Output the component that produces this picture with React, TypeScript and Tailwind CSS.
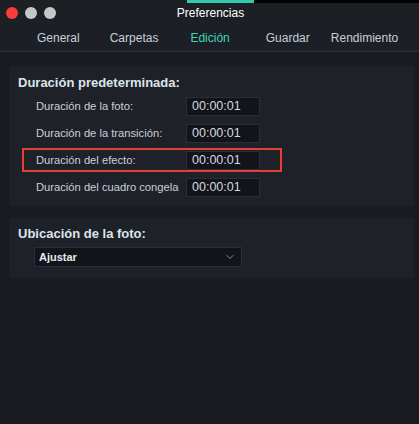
import { ChevronDown } from "lucide-react";

const font = { fontFamily: '"Liberation Sans", Arial, sans-serif' };

const tabs = ["General", "Carpetas", "Edición", "Guardar", "Rendimiento"];

const rows = [
  "Duración de la foto:",
  "Duración de la transición:",
  "Duración del efecto:",
  "Duración del cuadro congelado:",
];

function TimeInput() {
  return (
    <div className="flex h-[19px] w-[74px] items-center border border-[#2a2e35] bg-[#121419] pl-[5px] text-[12.5px] text-[#d3d9e0]">
      00:00:01
    </div>
  );
}

export default function App() {
  return (
    <div className="relative h-[424px] w-[419px] overflow-hidden bg-[#181b20]" style={font}>
      {/* top edge of whatever sits behind the window */}
      <div className="absolute left-[187px] top-0 h-[3px] w-[67px] bg-[#33c9ad]" />
      <div className="absolute left-[254px] top-0 h-[3px] w-[165px] bg-black" />

      {/* title bar */}
      <div className="flex h-[25px] items-center bg-[#1c1f24] px-[6px]">
        <div className="flex gap-[7px]">
          <span className="h-[12px] w-[12px] rounded-full bg-[#fc3c3c]" />
          <span className="h-[12px] w-[12px] rounded-full bg-[#c6c6c6]" />
          <span className="h-[12px] w-[12px] rounded-full bg-[#c6c6c6]" />
        </div>
        <div className="flex-1 pr-[48px] text-center text-[12px] text-white">Preferencias</div>
      </div>

      {/* tabs */}
      <div className="flex h-[27px] items-center border-b border-[#2c3037] bg-[#1c1f25] pl-[37px] text-[12px] text-[#c8cfd8]">
        {tabs.map((t, i) => (
          <span
            key={t}
            className={
              (i === 2 ? "text-[#3dd5b8] " : "") +
              (i === 0 ? "mr-[30px]" : i === 1 ? "mr-[32px]" : i === 2 ? "mr-[36px]" : "mr-[21px]")
            }
          >
            {t}
          </span>
        ))}
      </div>

      <div className="flex flex-col gap-[12px] pl-[9px] pr-[5px] pt-[14px]">
        {/* Duración predeterminada */}
        <div className="relative bg-[#1e2128] pb-[9px] pt-[9px]">
          <div className="pl-[9px] text-[13px] font-bold leading-[16px] text-[#dde4ec]">Duración predeterminada:</div>
          <div className="mt-[6px] flex flex-col gap-[8px] pl-[27px]">
            {rows.map((r, i) => (
              <div key={r} className="relative flex items-center">
                {i === 2 && (
                  <div className="absolute left-[-14px] top-[-3px] h-[24px] w-[260px] border-2 border-[#e2403b]" />
                )}
                <div className="mr-[7px] w-[143px] overflow-hidden whitespace-nowrap text-[11.2px] text-[#c9d0d8]">{r}</div>
                <TimeInput />
              </div>
            ))}
          </div>
        </div>

        {/* Ubicación de la foto */}
        <div className="bg-[#1e2128] pb-[11px] pt-[8px]">
          <div className="pl-[9px] text-[13px] font-bold leading-[16px] text-[#dde4ec]">Ubicación de la foto:</div>
          <div className="ml-[25px] mt-[5px] flex h-[20px] w-[208px] items-center justify-between border border-[#2a2e35] bg-[#121419] pl-[4px] pr-[5px]">
            <span className="text-[11px] font-bold text-[#e6ebf0]">Ajustar</span>
            <ChevronDown size={12} strokeWidth={2} className="text-[#8a9099]" />
          </div>
        </div>
      </div>
    </div>
  );
}
